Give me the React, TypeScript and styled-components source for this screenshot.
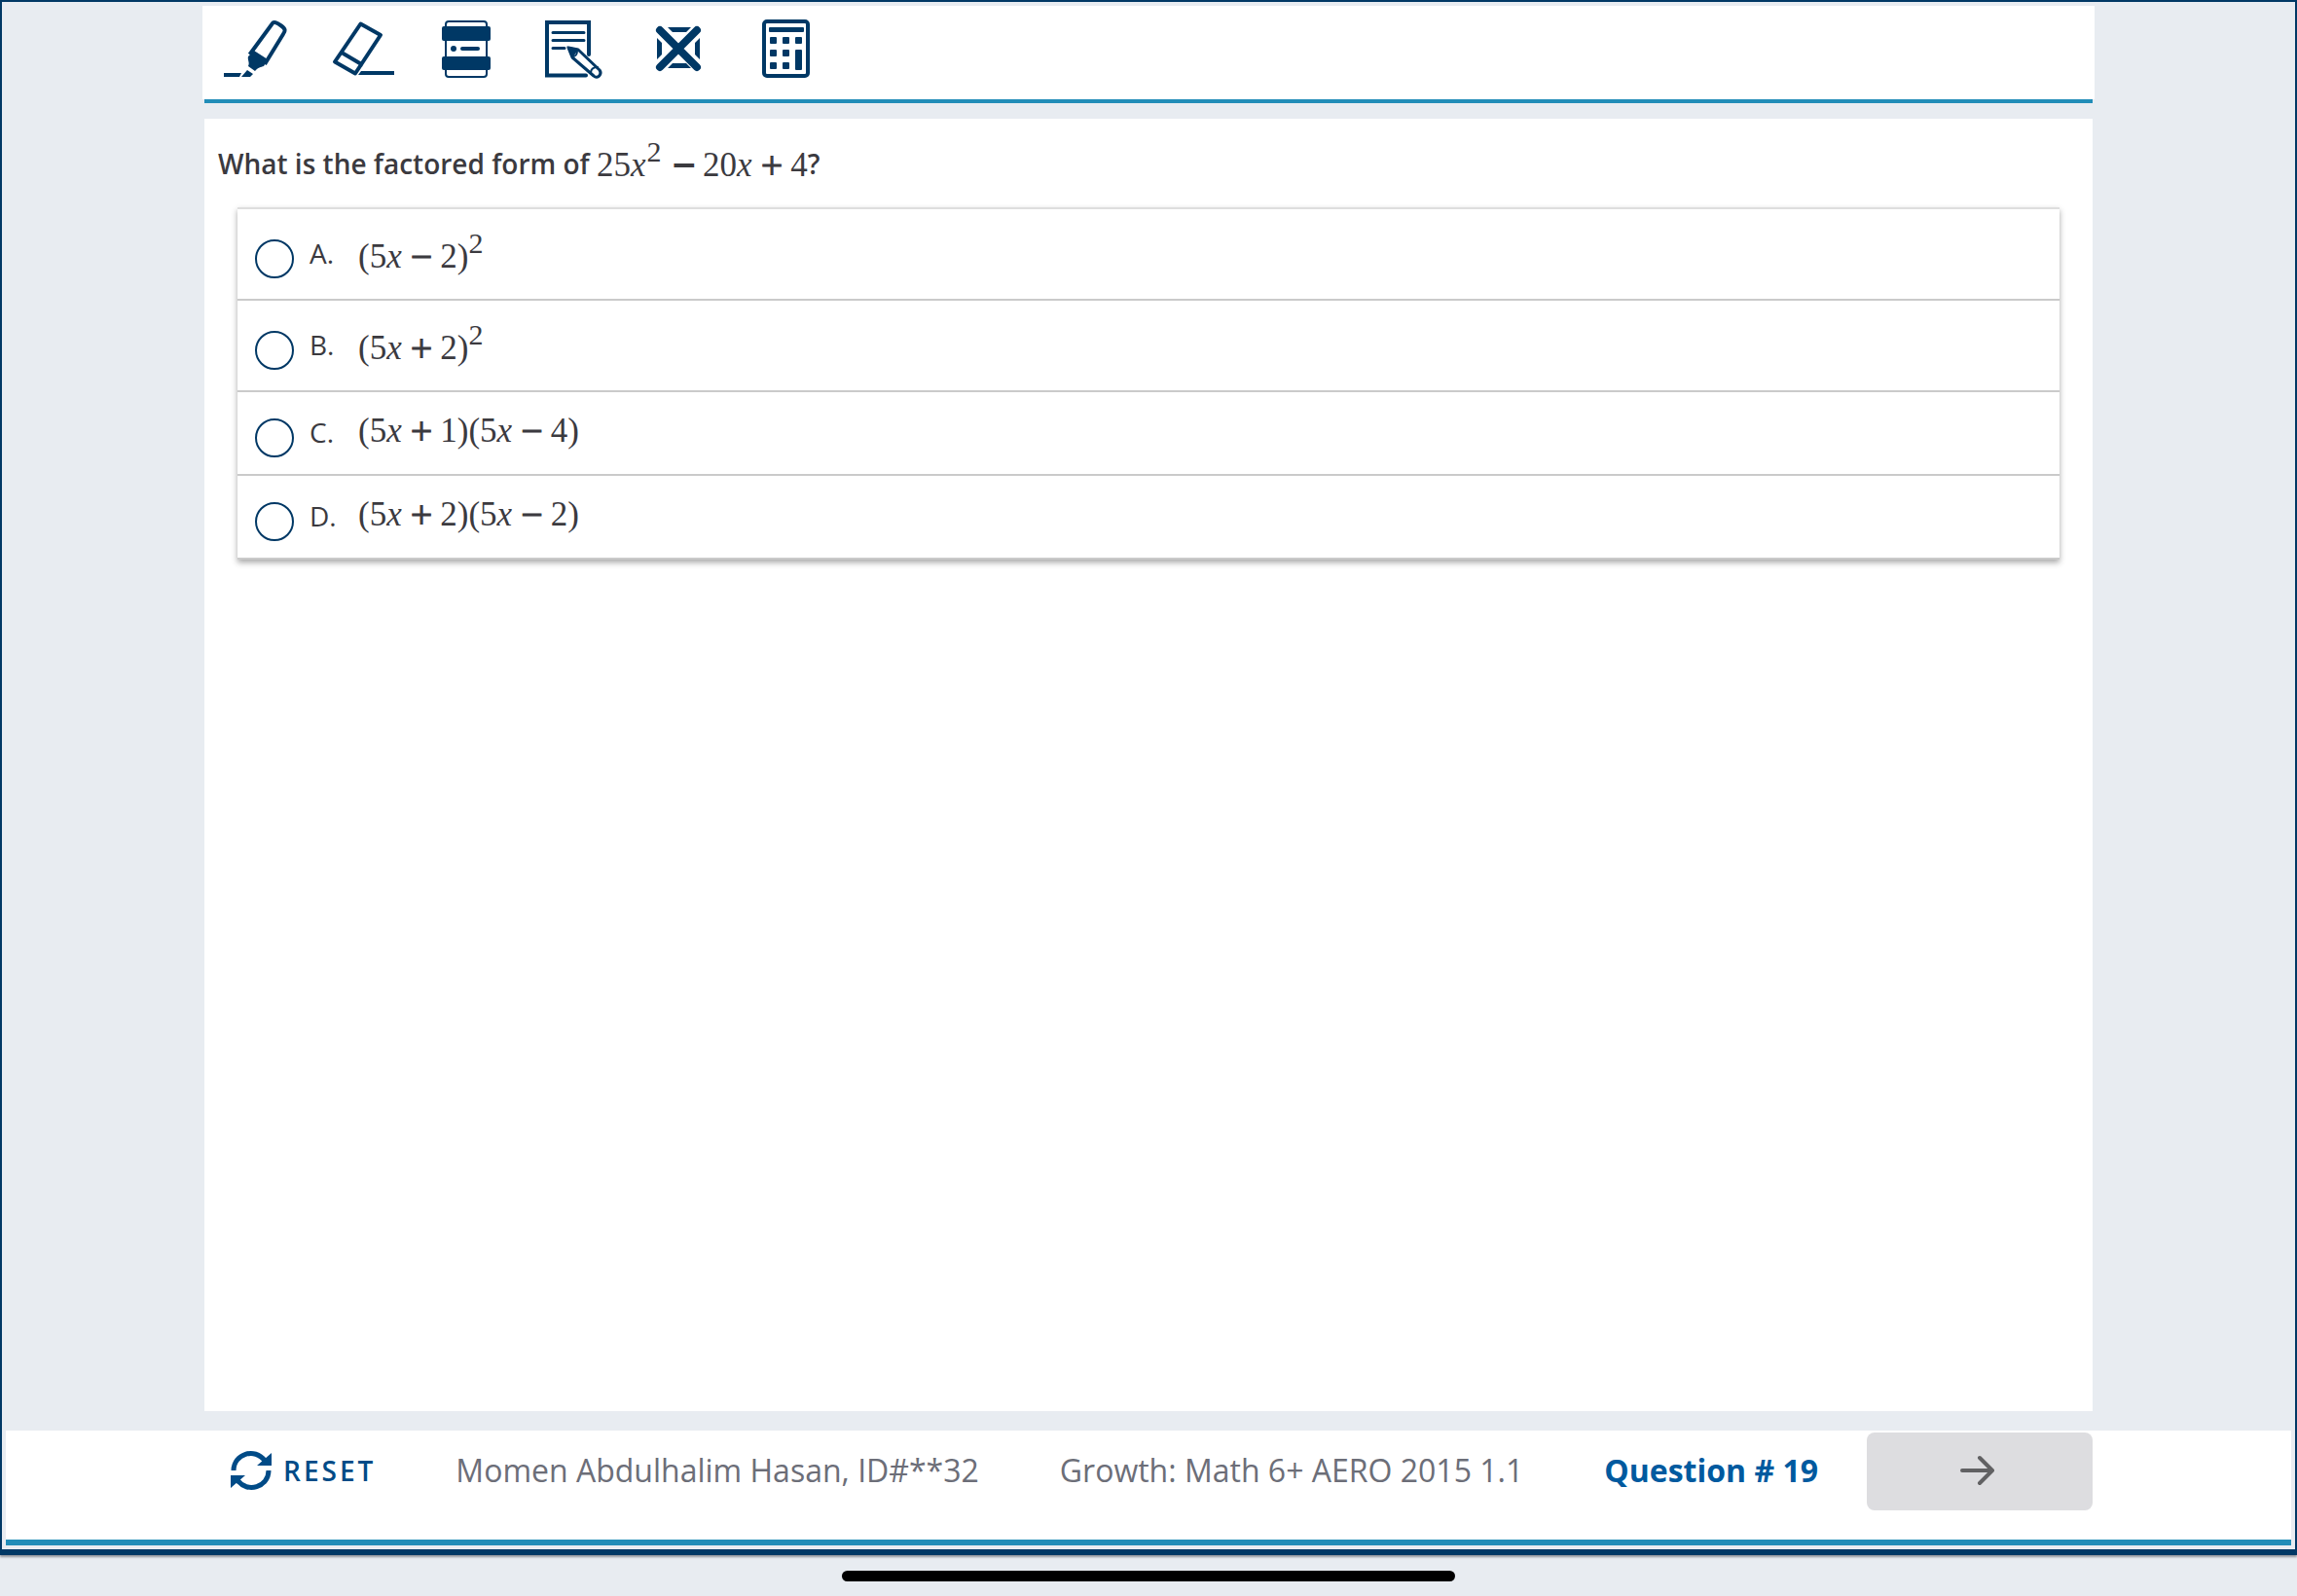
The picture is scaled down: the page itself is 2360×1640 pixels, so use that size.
import React, { useState } from "react";
import styled, { createGlobalStyle } from "styled-components";

const navy = "#003865";
const teal = "#218db8";
const page = "#e8ecf1";
const sans = `"Open Sans", "Noto Sans", sans-serif`;
const serif = `"Liberation Serif", "Times New Roman", serif`;

const GlobalStyle = createGlobalStyle`
  *, *::before, *::after { box-sizing: border-box; }
  body { margin: 0; background: ${page}; font-family: ${sans}; color: #3b3a3f; }
`;

const Screen = styled.div`
  min-height: 100vh;
  display: flex;
  flex-direction: column;
`;

const Frame = styled.div`
  flex: 1;
  display: flex;
  flex-direction: column;
  padding: 4px;
  border: 2px solid ${navy};
  border-bottom-width: 6px;
  box-shadow: 0 2px 2px rgba(60, 60, 70, 0.5);
`;

const Toolbar = styled.header`
  margin: 0 202px;
  height: 96px;
  padding: 12px 16px;
  display: flex;
  gap: 38px;
  background: #fff;
`;

const ToolButton = styled.button`
  width: 72px;
  height: 66px;
  padding: 0;
  border: 0;
  background: none;
  color: ${navy};

  svg { display: block; width: 72px; height: 66px; }
`;

const Rule = styled.div`
  height: 4px;
  margin: 0 204px;
  background: ${teal};
`;

const Content = styled.main`
  flex: 1;
  margin: 16px 204px 20px;
  padding: 15px 14px;
  background: #fff;
`;

const MathText = styled.span`
  padding-bottom: 4px;
  font-family: ${serif};
  font-size: 35px;
  line-height: 48px;
  font-weight: 400;
  white-space: nowrap;

  i { padding-right: 1px; }
  sup { font-size: 30px; line-height: 38px; vertical-align: 15px; }
`;

const Prompt = styled.h1`
  margin: 0;
  height: 76px;
  font-size: 28px;
  line-height: 52px;
  font-weight: 600;

  ${MathText} { vertical-align: -2px; }
`;

const Operator = styled.span<{ $bold?: boolean }>`
  padding: 0 8px 0 ${(p) => (p.$bold ? 12 : 8)}px;
  font-size: 40px;
  line-height: 0;
  vertical-align: -2px;
  -webkit-text-stroke: ${(p) => (p.$bold ? 2 : 1)}px currentColor;
`;

const Choices = styled.fieldset`
  margin: 0 20px;
  padding: 0;
  min-width: 0;
  border: 0;
  border-top: 2px solid #dedede;
  box-shadow: 0 3px 6px rgba(0, 0, 0, 0.35);
`;

const Choice = styled.label<{ $tall?: boolean }>`
  height: ${(p) => (p.$tall ? 94 : 86)}px;
  padding-left: 18px;
  display: flex;
  align-items: center;
  border-bottom: 2px solid #cacaca;
`;

const Radio = styled.input`
  appearance: none;
  width: 40px;
  height: 40px;
  margin: 10px 16px 0 0;
  border: 2px solid ${navy};
  border-radius: 50%;
  background: #fff;

  &:checked { background: radial-gradient(${navy} 50%, #fff 55%); }
`;

const Letter = styled.span`
  width: 50px;
  padding-bottom: 2px;
  font-size: 28px;
  line-height: 36px;
`;

const Footer = styled.footer`
  height: 118px;
  padding: 2px 204px 0;
  display: flex;
  align-items: flex-start;
  background: #fff;
  border-bottom: 6px solid ${teal};
  font-size: 32px;
  line-height: 78px;
  color: #6c6e78;
  white-space: nowrap;
`;

const ResetButton = styled.button`
  height: 78px;
  margin: 0 82px 0 27px;
  padding: 0;
  display: flex;
  align-items: center;
  gap: 12px;
  border: 0;
  background: none;
  color: #004b87;
  font: 600 28px/78px ${sans};
  letter-spacing: 3px;

  svg { width: 42px; height: 40px; }
`;

const Student = styled.span`
  margin-right: 83px;
`;

const Counter = styled.strong`
  margin-left: auto;
  margin-right: 50px;
  color: #005a9f;
`;

const NextButton = styled.button`
  width: 232px;
  height: 80px;
  padding: 0 4px 2px 0;
  display: flex;
  align-items: center;
  justify-content: center;
  border: 0;
  border-radius: 8px;
  background: #dddde0;
  color: #616163;

  svg { width: 36px; height: 32px; }
`;

const HomeArea = styled.div`
  height: 42px;
  display: flex;
  justify-content: center;
  padding-top: 16px;
`;

const HomeBar = styled.div`
  width: 630px;
  height: 11px;
  border-radius: 6px;
  background: #000;
`;

const Highlighter = () => (
  <svg viewBox="0 0 72 66" fill="currentColor">
    <path d="M6 57H24L22 61H6Z" />
    <path d="M30 54 36 58 33 61H24Z" />
    <path d="M37 34 51 43 47 50C44 51 41 51 38 55L31 50C33 46 30 44 31 40Z" />
    <path d="M32.500 38 56 6C57 4 60 5 65 8.500S69 14 67 17L48 48" fill="none" stroke="currentColor" strokeWidth="4" />
  </svg>
);

const Eraser = () => (
  <svg viewBox="0 0 72 66" fill="none" stroke="currentColor" strokeWidth="4">
    <path d="M36.500 6.500 57 18 31 57.500 10 45.500ZM17 36 39 49" strokeLinejoin="round" />
    <path d="M37 55H71V59H34Z" fill="currentColor" stroke="none" />
  </svg>
);

const LineReader = () => (
  <svg viewBox="0 0 72 66" fill="currentColor">
    <rect x="14" y="4" width="42" height="57" rx="3" fill="none" stroke="currentColor" strokeWidth="2" />
    <rect x="10" y="9" width="50" height="15" rx="2" />
    <rect x="10" y="40" width="50" height="14" rx="2" />
    <circle cx="22" cy="32" r="3" />
    <path d="M31 32H47" stroke="currentColor" strokeWidth="4" strokeLinecap="round" />
  </svg>
);

const Notepad = () => (
  <svg viewBox="0 0 72 66" fill="none" stroke="currentColor" strokeWidth="4" strokeLinecap="round">
    <path d="M51 38V5H8V59.500H48" />
    <path d="M14 15.500H46M14 23.500H46M14 31.500H26" strokeWidth="3" />
    <path d="M30 31 40 33 62 54C65 58 60 64 56 60L34 41Z" strokeWidth="3" strokeLinejoin="round" />
    <path d="M30 31 39 33 34 40Z" fill="currentColor" strokeWidth="2" />
    <path d="M34 40C38 40 39 38 39 34M53 57C53 53 56 51 60 51" strokeWidth="2" />
  </svg>
);

const Eliminator = () => (
  <svg viewBox="0 0 72 66" fill="currentColor">
    <path d="M22 10H46L41 15H27ZM27 47H41L46 52H22ZM11 21 16 26V38L11 43ZM55 21 50 26V38L55 43Z" />
    <path d="M14 13 52 51M52 13 14 51" stroke="currentColor" strokeWidth="8" strokeLinecap="round" />
  </svg>
);

const Calculator = () => (
  <svg viewBox="0 0 72 66" fill="currentColor">
    <rect x="11" y="4" width="45" height="56" rx="3" fill="none" stroke="currentColor" strokeWidth="4" />
    <rect x="16" y="10" width="36" height="5" rx="1" />
    {[20, 33, 46].map((y) =>
      [17, 30, 43].map((x) =>
        x === 43 && y > 20 ? null : <rect key={`${x}-${y}`} x={x} y={y} width="7" height="7" rx="1" />
      )
    )}
    <rect x="43" y="33" width="7" height="21" rx="1" />
  </svg>
);

const tools = [
  { name: "Highlighter", Icon: Highlighter },
  { name: "Eraser", Icon: Eraser },
  { name: "Line reader", Icon: LineReader },
  { name: "Notepad", Icon: Notepad },
  { name: "Answer eliminator", Icon: Eliminator },
  { name: "Calculator", Icon: Calculator },
];

const X = () => <i>x</i>;
const Plus = () => <Operator>+</Operator>;
const Minus = ({ bold }: { bold?: boolean }) => <Operator $bold={bold}>−</Operator>;

const choices = [
  { letter: "A", tall: true, math: <>(5<X /><Minus />2)<sup>2</sup></> },
  { letter: "B", tall: true, math: <>(5<X /><Plus />2)<sup>2</sup></> },
  { letter: "C", tall: false, math: <>(5<X /><Plus />1)(5<X /><Minus />4)</> },
  { letter: "D", tall: false, math: <>(5<X /><Plus />2)(5<X /><Minus />2)</> },
];

export default function App() {
  const [picked, setPicked] = useState("");
  return (
    <Screen>
      <GlobalStyle />
      <Frame>
        <Toolbar>
          {tools.map(({ name, Icon }) => (
            <ToolButton key={name} type="button" aria-label={name}>
              <Icon />
            </ToolButton>
          ))}
        </Toolbar>
        <Rule />
        <Content>
          <Prompt>
            What is the factored form of{" "}
            <MathText>
              25<X /><sup>2</sup><Minus bold />20<X /><Plus />4
            </MathText>
            ?
          </Prompt>
          <Choices aria-label="Answer choices">
            {choices.map(({ letter, tall, math }) => (
              <Choice key={letter} $tall={tall}>
                <Radio
                  type="radio"
                  name="answer"
                  value={letter}
                  checked={picked === letter}
                  onChange={() => setPicked(letter)}
                />
                <Letter>{letter}.</Letter>
                <MathText>{math}</MathText>
              </Choice>
            ))}
          </Choices>
        </Content>
        <Footer>
          <ResetButton type="button" onClick={() => setPicked("")}>
            <svg viewBox="0 0 42 40" fill="currentColor">
              <path d="M3 20C3 3 25-4 35 10M39 20C39 37 17 44 7 30" fill="none" stroke="currentColor" strokeWidth="5" />
              <path d="M42 2V15H27ZM0 38V25H15Z" />
            </svg>
            RESET
          </ResetButton>
          <Student>Momen Abdulhalim Hasan, ID#**32</Student>
          <span>Growth: Math 6+ AERO 2015 1.1</span>
          <Counter>Question # 19</Counter>
          <NextButton type="button" aria-label="Next question">
            <svg viewBox="0 0 36 32" fill="none" stroke="currentColor" strokeWidth="4" strokeLinecap="round" strokeLinejoin="round">
              <path d="M2 16H33M20 3 33 16 20 29" />
            </svg>
          </NextButton>
        </Footer>
      </Frame>
      <HomeArea>
        <HomeBar />
      </HomeArea>
    </Screen>
  );
}
